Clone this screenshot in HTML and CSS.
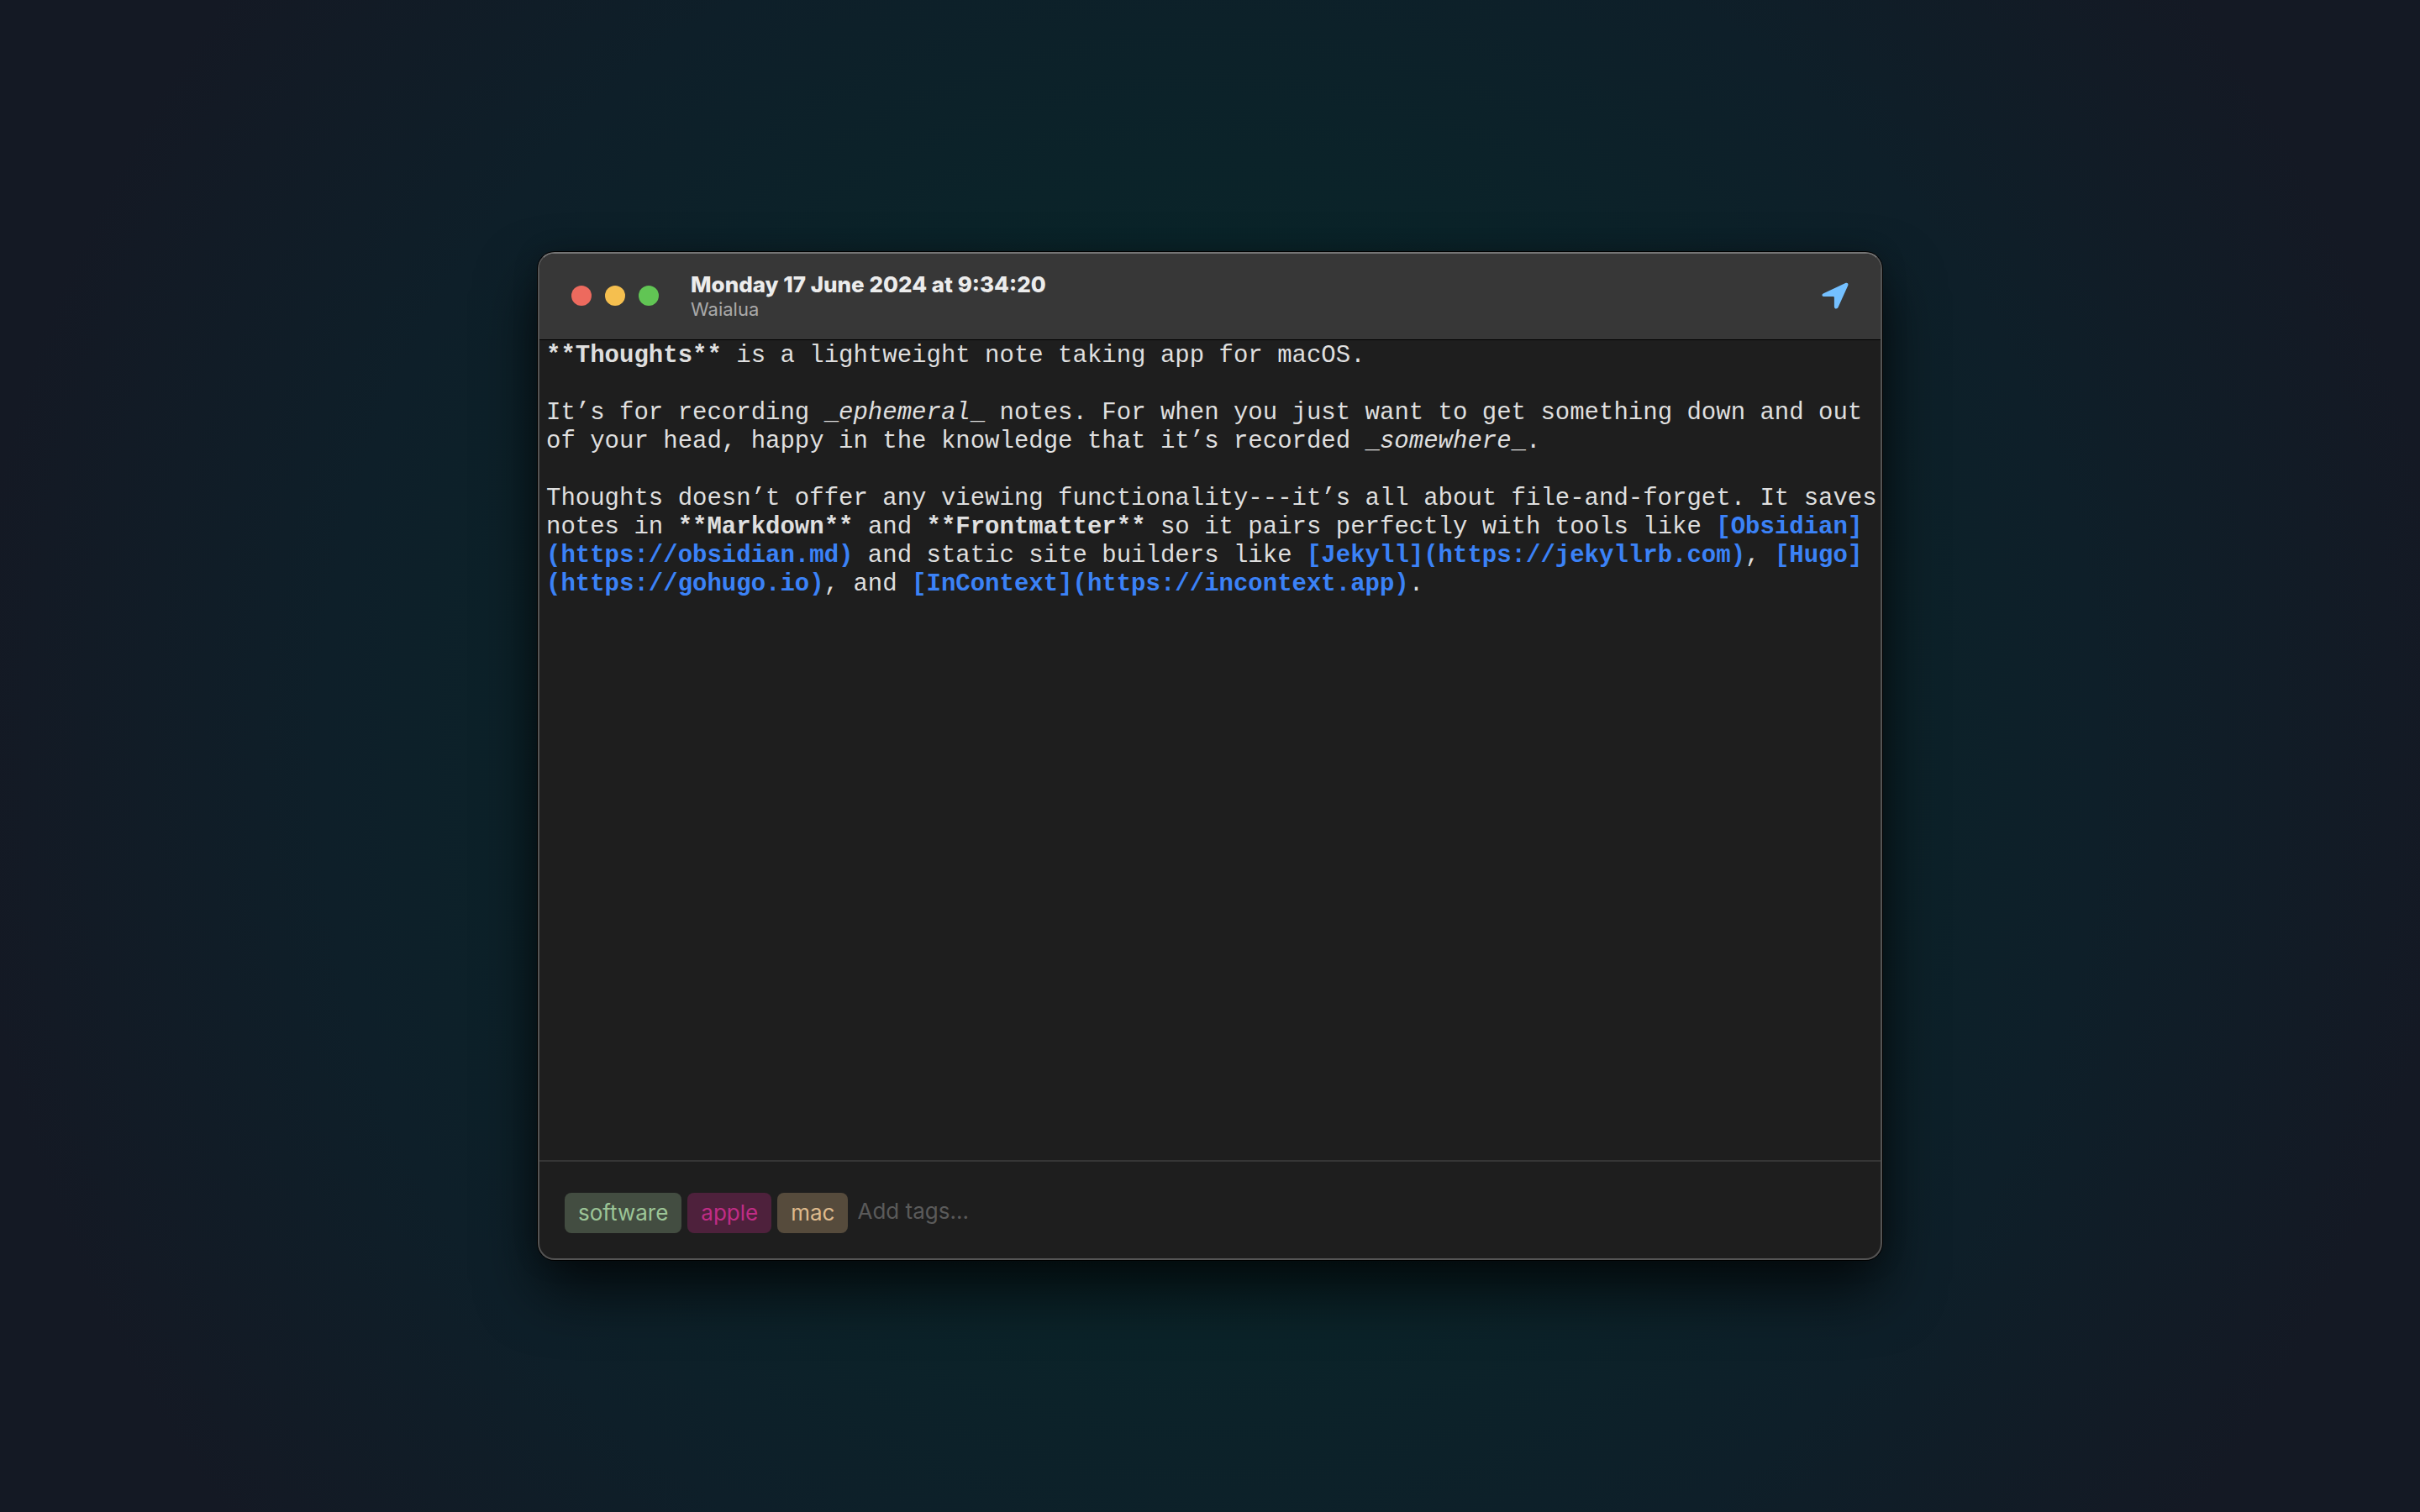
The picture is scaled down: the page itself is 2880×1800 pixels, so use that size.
FILE: index.html
```html
<!DOCTYPE html>
<html lang="en">
<head>
<meta charset="utf-8">
<title>Thoughts</title>
<link rel="stylesheet" href="styles.css">
</head>
<body>
<main class="window">
  <header class="titlebar">
    <div class="controls">
      <button class="control control-close" aria-label="Close"></button>
      <button class="control control-minimize" aria-label="Minimize"></button>
      <button class="control control-zoom" aria-label="Zoom"></button>
    </div>
    <div class="heading">
      <h1 class="title">Monday 17 June 2024 at 9:34:20</h1>
      <p class="place">Waialua</p>
    </div>
    <button class="location" aria-label="Location">
      <svg viewBox="0 0 32 32" width="32" height="32" aria-hidden="true">
        <path d="M2.2 13.2 28.2 1.1C30.5 0 32.2 1.8 31.2 4L19.6 29.8C18.4 32.4 14.9 31.8 14.9 28.9V18.2Q14.9 17.1 13.8 17.1H3C0 17.1-.5 14.4 2.2 13.2Z" fill="#74c0ff"/>
      </svg>
    </button>
  </header>
  <article class="editor">
    <p><strong>**Thoughts**</strong> is a lightweight note taking app for macOS.</p>
    <p>It’s for recording _<em>ephemeral</em>_ notes. For when you just want to get something down and out of your head, happy in the knowledge that it’s recorded _<em>somewhere</em>_.</p>
    <p>Thoughts doesn’t offer any viewing functionality---it’s all about file-and-forget. It saves notes in <strong>**Markdown**</strong> and <strong>**Frontmatter**</strong> so it pairs perfectly with tools like <a href="https://obsidian.md">[Obsidian](https://obsidian.md)</a> and static site builders like <a href="https://jekyllrb.com">[Jekyll](https://jekyllrb.com)</a>, <a href="https://gohugo.io">[Hugo](https://gohugo.io)</a>, and <a href="https://incontext.app">[InContext](https://incontext.app)</a>.</p>
  </article>
  <footer class="tags">
    <span class="tag tag-green">software</span>
    <span class="tag tag-pink">apple</span>
    <span class="tag tag-tan">mac</span>
    <input class="tag-input" type="text" placeholder="Add tags..." aria-label="Add tags">
  </footer>
</main>
</body>
</html>
```
FILE: styles.css
```css
* {
  box-sizing: border-box;
}

body {
  margin: 0;
  min-height: 100vh;
  padding: 300px 24px;
  display: flex;
  justify-content: center;
  background: radial-gradient(circle at center, #07272a 0, #0a2429 600px, #0e1f29 1060px, #141924 1480px);
  font-family: Inter, "Liberation Sans", sans-serif;
  color: #dfdfdf;
}

h1,
p {
  margin: 0;
}

.window {
  flex: 1;
  max-width: 1600px;
  display: flex;
  flex-direction: column;
  border: 2px solid #545454;
  border-top-color: #747474;
  border-radius: 20px;
  background: #1e1e1e;
  box-shadow: 0 0 0 1px #000, 0 36px 70px rgba(0, 0, 0, 0.7), 0 0 30px rgba(0, 0, 0, 0.2);
}

.titlebar {
  display: flex;
  align-items: center;
  gap: 38px;
  padding: 21px 38px 23px;
  border-bottom: 1px solid #000;
  border-radius: 18px 18px 0 0;
  background: #373737;
}

.controls {
  display: flex;
  gap: 16px;
}

.control {
  width: 24px;
  height: 24px;
  padding: 0;
  border: 0;
  border-radius: 50%;
}

.control-close {
  background: #ed6a5e;
}

.control-minimize {
  background: #f5bf4f;
}

.control-zoom {
  background: #61c554;
}

.heading {
  flex: 1;
}

.title {
  font-size: 26px;
  line-height: 32px;
  font-weight: 800;
  color: #ececec;
}

.place {
  font-size: 22px;
  line-height: 26px;
  color: #a9a9a9;
}

.location {
  display: flex;
  padding: 0;
  border: 0;
  background: none;
}

.editor {
  flex: 1;
  display: flex;
  flex-direction: column;
  gap: 34px;
  padding: 2px 0 34px 8px;
  font-family: "Liberation Mono", monospace;
  font-size: 29px;
  line-height: 34px;
}

.editor a {
  color: #3b82f7;
  font-weight: 700;
  text-decoration: none;
}

.tags {
  display: flex;
  align-items: center;
  gap: 7px;
  padding: 37px 30px 30px;
  border-top: 2px solid #363636;
  font-size: 26px;
  line-height: 48px;
}

.tag {
  padding: 0 16px;
  border-radius: 8px;
}

.tag-green {
  background: #434d41;
  color: #9cc597;
}

.tag-pink {
  background: #4e213c;
  color: #c12c86;
}

.tag-tan {
  background: #564b3c;
  color: #dfba8c;
}

.tag-input {
  flex: 1;
  height: 44px;
  margin-bottom: 4px;
  padding: 0 4px;
  border: 0;
  outline: 0;
  background: none;
  color: #dfdfdf;
  font: inherit;
}

.tag-input::placeholder {
  color: #5a5a5a;
  opacity: 1;
}
```
